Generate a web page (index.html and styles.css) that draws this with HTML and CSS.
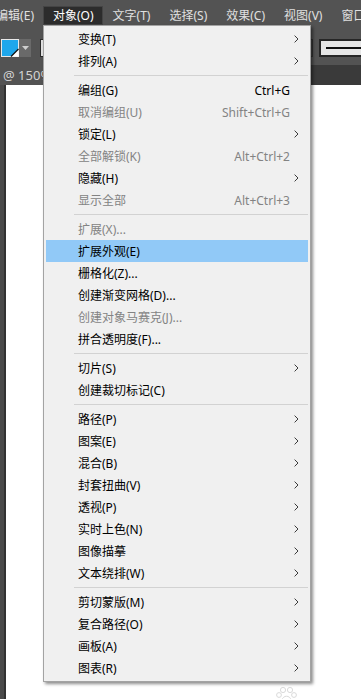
FILE: index.html
```html
<!DOCTYPE html>
<html lang="zh-CN">
<head>
<meta charset="utf-8">
<title>对象菜单</title>
<link rel="stylesheet" href="styles.css">
</head>
<body>
<div class="app">
  <div class="menubar">
    <div class="mb-item">编辑(E)</div>
    <div class="mb-item active">对象(O)</div>
    <div class="mb-item">文字(T)</div>
    <div class="mb-item">选择(S)</div>
    <div class="mb-item">效果(C)</div>
    <div class="mb-item">视图(V)</div>
    <div class="mb-item">窗口(W)</div>
  </div>
  <div class="ctrlbar">
    <div class="swatch">
      <svg width="18" height="18" viewBox="0 0 18 18">
        <rect x="0.5" y="0.5" width="17" height="17" fill="#1ea7ec" stroke="#e8e8e8"/>
        <polygon points="17.5,10 17.5,17.5 10,17.5" fill="#ffffff"/>
        <line x1="10" y1="17.5" x2="17.5" y2="10" stroke="#111" stroke-width="1.2"/>
      </svg>
    </div>
    <div class="dd-btn">
      <svg width="7" height="4" viewBox="0 0 7 4"><polygon points="0,0 7,0 3.5,4" fill="#cfcfcf"/></svg>
    </div>
    <div class="stroke-swatch"></div>
    <div class="spacer"></div>
    <div class="weight-box"></div>
    <div class="line-box"><div class="stroke-line"></div></div>
  </div>
  <div class="tabbar">
    <div class="doc-tab">@ 150% (RGB/预览)</div>
  </div>
  <div class="workspace">
    <div class="rail"></div>
    <div class="rail-edge"></div>
    <div class="canvas"></div>
  </div>
</div>

<div class="menu">
  <div class="mi"><span>变换(T)</span><span></span><span class="arr"><svg width="5" height="8" viewBox="0 0 5 8"><path d="M0.6 0.6 L4 4 L0.6 7.4" fill="none" stroke="#3a3a3a"/></svg></span></div>
  <div class="mi"><span>排列(A)</span><span></span><span class="arr"><svg width="5" height="8" viewBox="0 0 5 8"><path d="M0.6 0.6 L4 4 L0.6 7.4" fill="none" stroke="#3a3a3a"/></svg></span></div>
  <div class="sep"></div>
  <div class="mi"><span>编组(G)</span><span class="sc">Ctrl+G</span><span></span></div>
  <div class="mi disabled"><span>取消编组(U)</span><span class="sc">Shift+Ctrl+G</span><span></span></div>
  <div class="mi"><span>锁定(L)</span><span></span><span class="arr"><svg width="5" height="8" viewBox="0 0 5 8"><path d="M0.6 0.6 L4 4 L0.6 7.4" fill="none" stroke="#3a3a3a"/></svg></span></div>
  <div class="mi disabled"><span>全部解锁(K)</span><span class="sc">Alt+Ctrl+2</span><span></span></div>
  <div class="mi"><span>隐藏(H)</span><span></span><span class="arr"><svg width="5" height="8" viewBox="0 0 5 8"><path d="M0.6 0.6 L4 4 L0.6 7.4" fill="none" stroke="#3a3a3a"/></svg></span></div>
  <div class="mi disabled"><span>显示全部</span><span class="sc">Alt+Ctrl+3</span><span></span></div>
  <div class="sep"></div>
  <div class="mi disabled"><span>扩展(X)...</span><span></span><span></span></div>
  <div class="mi hl"><span>扩展外观(E)</span><span></span><span></span></div>
  <div class="mi"><span>栅格化(Z)...</span><span></span><span></span></div>
  <div class="mi"><span>创建渐变网格(D)...</span><span></span><span></span></div>
  <div class="mi disabled"><span>创建对象马赛克(J)...</span><span></span><span></span></div>
  <div class="mi"><span>拼合透明度(F)...</span><span></span><span></span></div>
  <div class="sep"></div>
  <div class="mi"><span>切片(S)</span><span></span><span class="arr"><svg width="5" height="8" viewBox="0 0 5 8"><path d="M0.6 0.6 L4 4 L0.6 7.4" fill="none" stroke="#3a3a3a"/></svg></span></div>
  <div class="mi"><span>创建裁切标记(C)</span><span></span><span></span></div>
  <div class="sep"></div>
  <div class="mi"><span>路径(P)</span><span></span><span class="arr"><svg width="5" height="8" viewBox="0 0 5 8"><path d="M0.6 0.6 L4 4 L0.6 7.4" fill="none" stroke="#3a3a3a"/></svg></span></div>
  <div class="mi"><span>图案(E)</span><span></span><span class="arr"><svg width="5" height="8" viewBox="0 0 5 8"><path d="M0.6 0.6 L4 4 L0.6 7.4" fill="none" stroke="#3a3a3a"/></svg></span></div>
  <div class="mi"><span>混合(B)</span><span></span><span class="arr"><svg width="5" height="8" viewBox="0 0 5 8"><path d="M0.6 0.6 L4 4 L0.6 7.4" fill="none" stroke="#3a3a3a"/></svg></span></div>
  <div class="mi"><span>封套扭曲(V)</span><span></span><span class="arr"><svg width="5" height="8" viewBox="0 0 5 8"><path d="M0.6 0.6 L4 4 L0.6 7.4" fill="none" stroke="#3a3a3a"/></svg></span></div>
  <div class="mi"><span>透视(P)</span><span></span><span class="arr"><svg width="5" height="8" viewBox="0 0 5 8"><path d="M0.6 0.6 L4 4 L0.6 7.4" fill="none" stroke="#3a3a3a"/></svg></span></div>
  <div class="mi"><span>实时上色(N)</span><span></span><span class="arr"><svg width="5" height="8" viewBox="0 0 5 8"><path d="M0.6 0.6 L4 4 L0.6 7.4" fill="none" stroke="#3a3a3a"/></svg></span></div>
  <div class="mi"><span>图像描摹</span><span></span><span class="arr"><svg width="5" height="8" viewBox="0 0 5 8"><path d="M0.6 0.6 L4 4 L0.6 7.4" fill="none" stroke="#3a3a3a"/></svg></span></div>
  <div class="mi"><span>文本绕排(W)</span><span></span><span class="arr"><svg width="5" height="8" viewBox="0 0 5 8"><path d="M0.6 0.6 L4 4 L0.6 7.4" fill="none" stroke="#3a3a3a"/></svg></span></div>
  <div class="sep"></div>
  <div class="mi"><span>剪切蒙版(M)</span><span></span><span class="arr"><svg width="5" height="8" viewBox="0 0 5 8"><path d="M0.6 0.6 L4 4 L0.6 7.4" fill="none" stroke="#3a3a3a"/></svg></span></div>
  <div class="mi"><span>复合路径(O)</span><span></span><span class="arr"><svg width="5" height="8" viewBox="0 0 5 8"><path d="M0.6 0.6 L4 4 L0.6 7.4" fill="none" stroke="#3a3a3a"/></svg></span></div>
  <div class="mi"><span>画板(A)</span><span></span><span class="arr"><svg width="5" height="8" viewBox="0 0 5 8"><path d="M0.6 0.6 L4 4 L0.6 7.4" fill="none" stroke="#3a3a3a"/></svg></span></div>
  <div class="mi"><span>图表(R)</span><span></span><span class="arr"><svg width="5" height="8" viewBox="0 0 5 8"><path d="M0.6 0.6 L4 4 L0.6 7.4" fill="none" stroke="#3a3a3a"/></svg></span></div>
</div>

<div class="watermark">
  <svg width="30" height="14" viewBox="0 0 30 14">
    <g fill="none" stroke="#dadada" stroke-width="1">
      <circle cx="11" cy="4" r="2.6"/>
      <circle cx="18" cy="4" r="2.6"/>
      <circle cx="7" cy="9" r="2.4"/>
      <circle cx="22" cy="9" r="2.4"/>
      <path d="M10 14 C11 9 18 9 19 14"/>
    </g>
  </svg>
</div>
</body>
</html>
```
FILE: styles.css
```css
* { box-sizing: border-box; }
html, body { margin: 0; padding: 0; }
body {
  width: 361px;
  height: 699px;
  overflow: hidden;
  background: #ffffff;
  font-family: "Noto Sans", "Noto Sans CJK SC", sans-serif;
  font-size: 12px;
  position: relative;
}
.app {
  display: flex;
  flex-direction: column;
  height: 699px;
}
.menubar {
  height: 25px;
  flex-shrink: 0;
  background: #535353;
  display: flex;
  white-space: nowrap;
  overflow: hidden;
}
.mb-item {
  margin-top: 6px;
  height: 19px;
  padding: 0 8.5px;
  border: 1px solid transparent;
  line-height: 17px;
  color: #e0e0e0;
  flex-shrink: 0;
}
.mb-item:first-child { margin-left: -13.4px; }
.mb-item.active {
  background: #2c2c2c;
  border-color: #444444;
  color: #ffffff;
}
.ctrlbar {
  height: 40px;
  flex-shrink: 0;
  background: #535353;
  display: flex;
  align-items: flex-start;
  padding-top: 14px;
  overflow: hidden;
}
.swatch { margin-left: 1px; width: 18px; height: 18px; flex-shrink: 0; }
.swatch svg { display: block; }
.dd-btn {
  width: 12px;
  height: 18px;
  background: #6a6a6a;
  display: flex;
  align-items: center;
  justify-content: center;
  flex-shrink: 0;
}
.dd-btn svg { display: block; }
.stroke-swatch {
  margin-left: 9px;
  width: 24px;
  height: 18px;
  background: #e2e2e2;
  border: 1px solid #2a2a2a;
  flex-shrink: 0;
}
.spacer { flex: 1; }
.weight-box {
  width: 23px;
  height: 18px;
  border: 1px solid #333333;
  background: #464646;
  flex-shrink: 0;
}
.line-box {
  margin-left: 6px;
  margin-right: -4px;
  width: 46px;
  height: 18px;
  border: 2px solid #262626;
  background: #e6e6e6;
  display: flex;
  align-items: center;
  flex-shrink: 0;
}
.stroke-line {
  margin-left: 5px;
  flex: 1;
  height: 2px;
  background: #111111;
}
.tabbar {
  height: 20px;
  flex-shrink: 0;
  background: #3a3a3a;
  display: flex;
}
.doc-tab {
  width: 43px;
  background: #535353;
  color: #d2d2d2;
  font-size: 13px;
  line-height: 20px;
  padding-left: 3px;
  white-space: nowrap;
  overflow: hidden;
}
.workspace {
  flex: 1;
  display: flex;
}
.rail { width: 4px; background: #4a4a4a; }
.rail-edge { width: 2px; background: #323232; }
.canvas { flex: 1; background: #ffffff; }

.menu {
  position: absolute;
  left: 43px;
  top: 25px;
  width: 268px;
  border: 1px solid #a3a3a3;
  background: #f0f0f0;
  padding: 2px;
  box-shadow: 2px 2px 3px rgba(0, 0, 0, 0.45);
}
.mi {
  display: grid;
  grid-template-columns: 1fr auto 18px;
  align-items: center;
  height: 22px;
  padding-left: 32px;
  color: #000000;
  white-space: nowrap;
}
.mi.disabled { color: #838383; }
.mi.hl { background: #91c9f7; }
.sc { text-align: right; }
.arr { padding-left: 4px; display: flex; align-items: center; }
.arr svg { display: block; }
.sep {
  height: 1px;
  margin: 3px 0 3px 28px;
  background: #d2d2d2;
}
.watermark {
  position: absolute;
  left: 272px;
  top: 686px;
}
.watermark svg { display: block; }
```
